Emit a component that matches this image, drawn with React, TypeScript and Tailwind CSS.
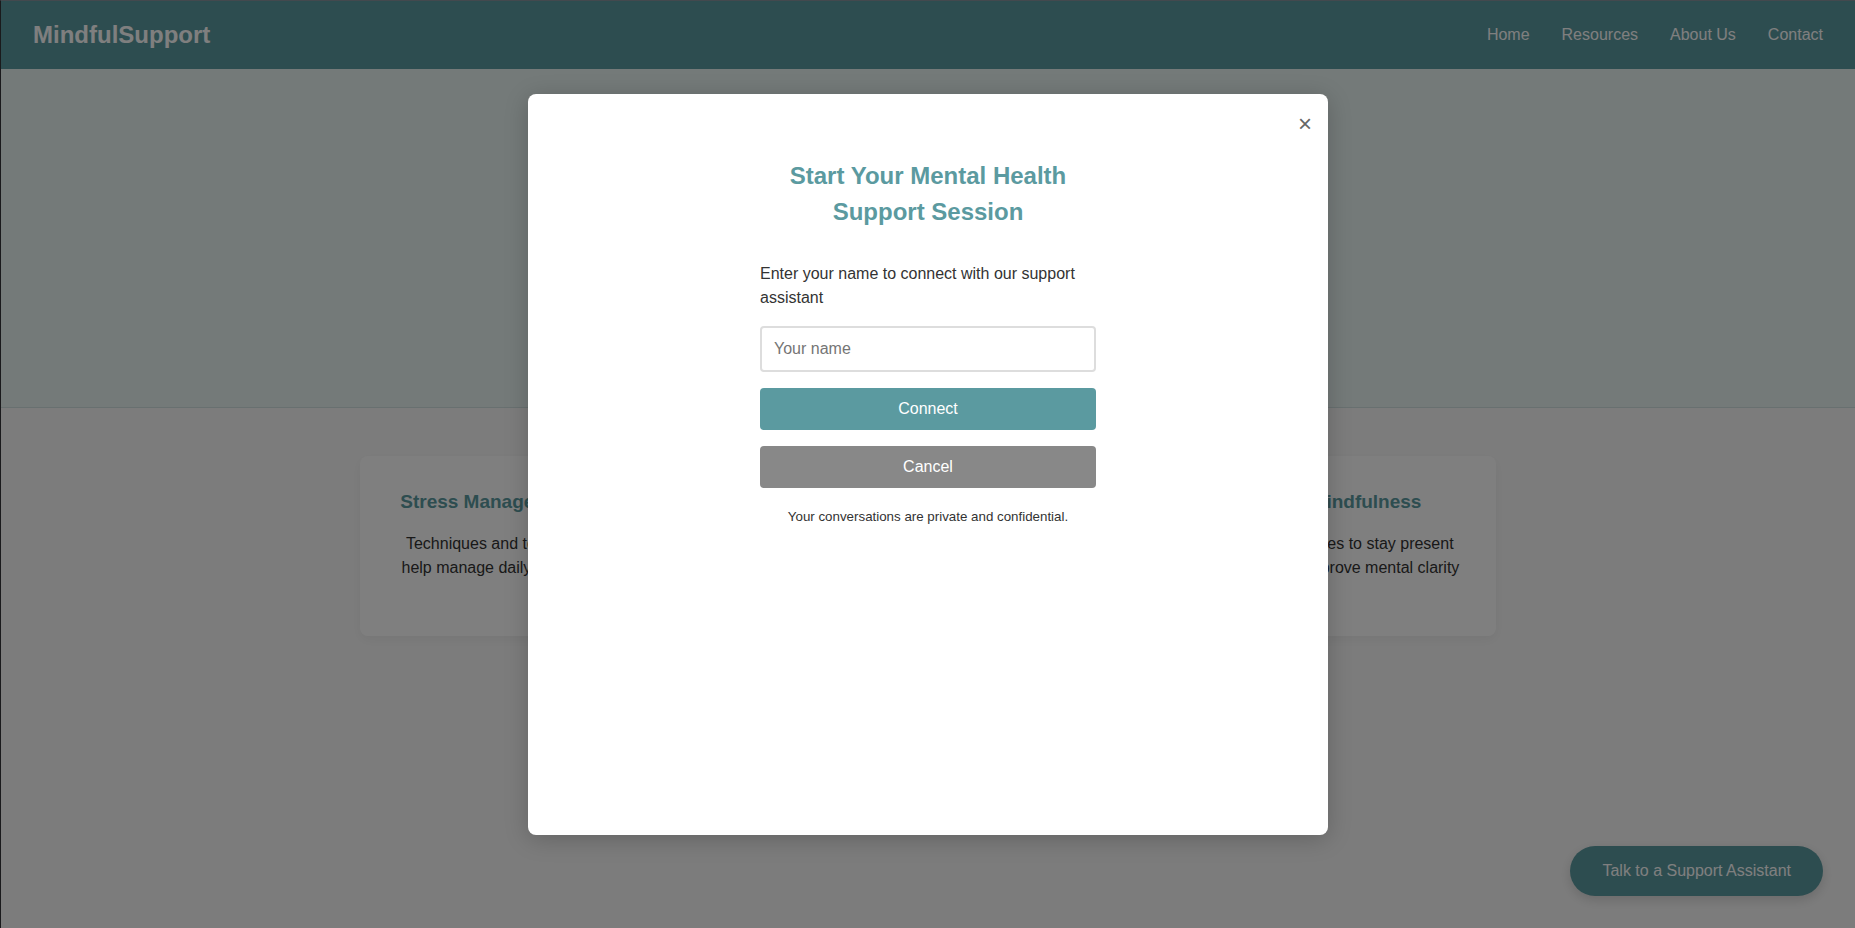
import { useState } from "react";

const links = ["Home", "Resources", "About Us", "Contact"];

const cards = [
  { title: "Stress Management", text: "Techniques and tools to help manage daily stress" },
  { title: "", text: "" },
  { title: "", text: "" },
  { title: "Mindfulness", text: "Practices to stay present and improve mental clarity" },
];

function Header() {
  return (
    <header className="flex items-center justify-between bg-[#5b9aa0] px-8 py-4 text-white">
      <div className="text-2xl leading-9 font-bold">MindfulSupport</div>
      <nav className="flex gap-8">
        {links.map((link) => (
          <a key={link} href="#">
            {link}
          </a>
        ))}
      </nav>
    </header>
  );
}

function Topics() {
  return (
    <section className="mx-auto grid max-w-[1200px] grid-cols-4 gap-8 px-8 py-12">
      {cards.map((card, i) => (
        <article
          key={i}
          className="min-h-[180px] rounded-lg bg-white p-8 text-center shadow-[0_4px_12px_rgba(0,0,0,0.05)]"
        >
          <h3 className="mb-4 text-[19px] leading-7 font-bold whitespace-nowrap text-[#5b9aa0]">{card.title}</h3>
          <p>{card.text}</p>
        </article>
      ))}
    </section>
  );
}

function SessionDialog({ onClose }: { onClose: () => void }) {
  const [name, setName] = useState("");
  return (
    <div className="absolute inset-0 flex items-center justify-center bg-black/50">
      <div
        role="dialog"
        aria-modal="true"
        aria-labelledby="session-title"
        className="relative h-4/5 w-full max-w-[800px] rounded-lg bg-white shadow-[0_4px_24px_rgba(0,0,0,0.2)]"
      >
        <button
          type="button"
          aria-label="Close"
          onClick={onClose}
          className="absolute top-4 right-4 text-2xl leading-7 text-[#666666]"
        >
          ×
        </button>
        <form
          onSubmit={(e) => e.preventDefault()}
          className="mx-auto flex max-w-[400px] flex-col gap-4 px-8 pt-16"
        >
          <h2 id="session-title" className="mb-4 text-center text-2xl leading-9 font-bold text-[#5b9aa0]">
            Start Your Mental Health Support Session
          </h2>
          <label htmlFor="name">Enter your name to connect with our support assistant</label>
          <input
            id="name"
            type="text"
            placeholder="Your name"
            value={name}
            onChange={(e) => setName(e.target.value)}
            className="h-[46px] rounded border-2 border-[#dddddd] px-3 placeholder:text-[#757575]"
          />
          <button type="submit" className="h-[42px] rounded bg-[#5b9aa0] text-white">
            Connect
          </button>
          <button type="button" onClick={onClose} className="h-[42px] rounded bg-[#888888] text-white">
            Cancel
          </button>
          <p className="text-center [font-size:smaller] leading-[26px]">
            Your conversations are private and confidential.
          </p>
        </form>
      </div>
    </div>
  );
}

export default function App() {
  const [open, setOpen] = useState(true);
  return (
    <div className="relative flex min-h-screen flex-col border-t border-l border-t-[#43494e] border-l-[#1a1a1c] bg-[#f9f9f9] font-['Liberation_Sans',Arial,sans-serif] text-base leading-6 text-[#333333]">
      <Header />
      <main>
        <section className="min-h-[339px] border-b border-[#d0e0e0] bg-[#e8f4f3]" />
        <Topics />
      </main>
      <button
        type="button"
        onClick={() => setOpen(true)}
        className="absolute right-8 bottom-8 h-[50px] rounded-full bg-[#5b9aa0] px-8 text-white shadow-[0_4px_12px_rgba(0,0,0,0.15)]"
      >
        Talk to a Support Assistant
      </button>
      {open && <SessionDialog onClose={() => setOpen(false)} />}
    </div>
  );
}
